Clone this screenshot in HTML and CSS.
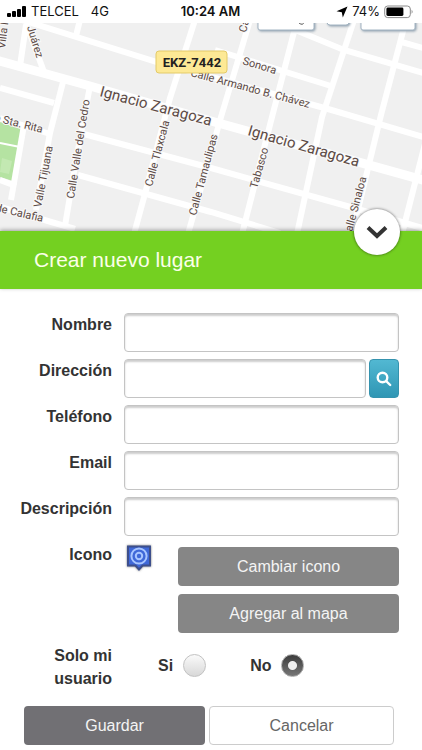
FILE: index.html
```html
<!DOCTYPE html>
<html lang="es">

<head>
  <meta charset="UTF-8">
  <meta name="viewport" content="width=device-width, initial-scale=1.0">
  <title>Crear nuevo lugar</title>
  <link rel="stylesheet" href="styles.css">
</head>

<body>

  <header class="status">
    <div class="status-left">
      <svg width="20" height="12" viewBox="0 0 20 12" aria-hidden="true">
        <rect x="0" y="7" width="4" height="4" rx="1" />
        <rect x="5" y="5" width="4" height="6" rx="1" />
        <rect x="10" y="3" width="4" height="8" rx="1" />
        <rect x="15" y="0" width="4" height="11" rx="1" />
      </svg>
      <span class="carrier">TELCEL</span>
      <span>4G</span>
    </div>
    <div class="clock">10:24 AM</div>
    <div class="status-right">
      <svg width="12" height="12" viewBox="0 0 12 12" aria-hidden="true">
        <path d="M11.5 .5 L6.8 11.5 L5.8 6.2 L.5 5.2 Z" />
      </svg>
      <span>74%</span>
      <svg width="30" height="14" viewBox="0 0 30 14" aria-hidden="true">
        <rect x=".7" y="1" width="25.6" height="11.6" rx="3" fill="none" stroke="#8a8a8a" />
        <rect x="2.4" y="2.6" width="17" height="8.4" rx="1.4" />
        <path d="M27.6 4.8 Q29.6 6.8 27.6 8.8 Z" fill="#8a8a8a" />
      </svg>
    </div>
  </header>

  <div class="map">
    <svg class="map-canvas" viewBox="0 23 422 208" preserveAspectRatio="xMidYMid slice">
      <!-- parque -->
      <path class="park" d="M0 122 L23 130 L13 181 L0 177 Z" />
      <path class="park-light" d="M2 158 L12 161 L9 174 L0 172 Z" />
      <path class="path" d="M0 143 L20 147" />

      <!-- calles -->
      <g class="roads">
        <path d="M22 20 L157 62 L328 109 L430 139" />
        <path d="M215 50 L331 86" />
        <path d="M288 27 L344 50 L430 75" />
        <path d="M398 41 L430 50" />
        <path d="M0 88 L54 103" />
        <path d="M0 118 L22 125 L50 134" />
        <path d="M80 133 L211 168 L354 208 L422 228" />
        <path d="M78 175 L211 212 L280 233" />
        <path d="M0 180 L16 186" />
        <path d="M0 207 L75 229" />
        <path d="M80 20 L76 36" />
        <path d="M26 25 L20 66" />
        <path d="M26 23 L44 72" />
        <path d="M63 82 L50 133 L36 210" />
        <path d="M24 125 L11 200" />
        <path d="M90 86 L76 160 L65 226" />
        <path d="M195 20 L170 98 L146 190 L134 234" />
        <path d="M250 20 L236 67 L221 117 L188 234" />
        <path d="M294 32 L272 117 L242 234" />
        <path d="M354 20 L322 117 L297 234" />
        <path d="M406 20 L381 115 L352 234" />
        <path d="M426 140 L402 234" />
      </g>
      <path class="avenue" d="M-4 60 L90 86 L211 121 L430 182" />

      <!-- nombres -->
      <g class="names">
        <text transform="translate(5 49) rotate(-83)">Villa I</text>
        <text transform="translate(27 27) rotate(73)">Juárez</text>
        <text transform="translate(246 33) rotate(-76)">Ca</text>
        <text transform="translate(242 64) rotate(17)">Sonora</text>
        <text transform="translate(190 76) rotate(15)">Calle Armando B. Chávez</text>
        <text transform="translate(-6 121) rotate(14)">e Sta. Rita</text>
        <text transform="translate(-5 211) rotate(13)">de Calafia</text>
        <text transform="translate(41 208) rotate(-79)">Valle Tijuana</text>
        <text transform="translate(74 199) rotate(-81)">Calle Valle del Cedro</text>
        <text transform="translate(152 187) rotate(-75)">Calle Tlaxcala</text>
        <text transform="translate(196 216) rotate(-75)">Calle Tamaulipas</text>
        <text transform="translate(257 189) rotate(-74)">Tabasco</text>
        <text transform="translate(352 232) rotate(-75)">alle Sinaloa</text>
      </g>
      <g class="names names-avenue">
        <text transform="translate(99 96) rotate(15)">Ignacio Zaragoza</text>
        <text transform="translate(247 135) rotate(16)">Ignacio Zaragoza</text>
      </g>

      <!-- controles que asoman arriba -->
      <g class="map-tabs">
        <rect x="258" y="14" width="56" height="16" rx="2" />
        <rect x="327" y="10" width="22" height="15" rx="3" />
        <rect x="361" y="14" width="54" height="16" rx="2" />
      </g>
      <path class="tab-mark" d="M299 23 Q303 26 304 22" />

      <!-- vehículo -->
      <rect class="plate" x="156" y="51" width="71" height="22" rx="3" />
      <text class="plate-text" x="192" y="67" text-anchor="middle">EKZ-7442</text>
    </svg>
  </div>

  <main class="panel">
    <div class="panel-head">
      <h1>Crear nuevo lugar</h1>
      <button type="button" class="collapse" aria-label="Cerrar">
        <svg width="22" height="16" viewBox="0 0 22 16" aria-hidden="true">
          <path d="M2 3.5 L11 12 L20 3.5" />
        </svg>
      </button>
    </div>

    <form class="form">
      <div class="row">
        <label for="nombre">Nombre</label>
        <input type="text" id="nombre" class="field">
      </div>
      <div class="row">
        <label for="direccion">Dirección</label>
        <div class="search">
          <input type="text" id="direccion" class="field">
          <button type="button" class="search-btn" aria-label="Buscar">
            <svg width="16" height="16" viewBox="0 0 16 16" aria-hidden="true">
              <circle cx="6.5" cy="6.5" r="4.8" />
              <path d="M10.2 10.2 L14.2 14" />
            </svg>
          </button>
        </div>
      </div>
      <div class="row">
        <label for="telefono">Teléfono</label>
        <input type="text" id="telefono" class="field">
      </div>
      <div class="row">
        <label for="email">Email</label>
        <input type="text" id="email" class="field">
      </div>
      <div class="row">
        <label for="descripcion">Descripción</label>
        <input type="text" id="descripcion" class="field">
      </div>

      <div class="row">
        <span class="label">Icono</span>
        <div class="icon-area">
          <svg class="marker" width="30" height="30" viewBox="0 0 30 30" aria-hidden="true">
            <path class="marker-box" d="M4 3.5 H26 V22.5 H18.5 L15 26.5 L11.5 22.5 H4 Z" />
            <circle cx="15" cy="13" r="7.6" />
            <circle cx="15" cy="13" r="3.2" />
          </svg>
          <div class="icon-actions">
            <button type="button" class="btn">Cambiar icono</button>
            <button type="button" class="btn">Agregar al mapa</button>
          </div>
        </div>
      </div>

      <div class="row row-user" role="radiogroup" aria-labelledby="solo">
        <span class="label" id="solo">Solo mi usuario</span>
        <div class="options">
          <label for="si">Si</label>
          <input type="radio" id="si" name="solo" class="radio">
          <label for="no" class="second">No</label>
          <input type="radio" id="no" name="solo" class="radio" checked>
        </div>
      </div>

      <div class="actions">
        <button type="submit" class="btn btn-save">Guardar</button>
        <button type="button" class="btn btn-cancel">Cancelar</button>
      </div>
    </form>
  </main>

</body>

</html>
```

FILE: styles.css
```css
* {
  box-sizing: border-box;
}

body {
  margin: 0;
  background: #fff;
  color: #333;
  font-family: "Liberation Sans", Arial, sans-serif;
  font-size: 16px;
}

button,
input {
  margin: 0;
  font: inherit;
}

svg {
  display: block;
}

/* barra de estado */

.status {
  display: grid;
  grid-template-columns: 1fr auto 1fr;
  align-items: center;
  height: 23px;
  padding: 0 8px 0 7px;
  color: #111;
  font-family: Inter, sans-serif;
  font-size: 13px;
  line-height: 23px;
}

.status-left,
.status-right {
  display: flex;
  align-items: center;
  gap: 4px;
}

.status-right {
  justify-content: flex-end;
}

.carrier {
  margin-right: 8px;
}

.clock {
  font-weight: 600;
}

/* mapa */

.map {
  height: 208px;
}

.map-canvas {
  width: 100%;
  height: 100%;
  background: #f0f0f0;
}

.park {
  fill: #b5e3a2;
}

.park-light {
  fill: #c3e9b2;
}

.path {
  stroke: #fff;
  stroke-width: 2;
}

.roads {
  fill: none;
  stroke: #fff;
  stroke-width: 6;
}

.avenue {
  fill: none;
  stroke: #fff;
  stroke-width: 9;
}

.names {
  fill: #5c4a45;
  stroke: #f8f8f8;
  stroke-width: 2px;
  paint-order: stroke;
  font-family: Roboto, sans-serif;
  font-size: 11px;
}

.names-avenue {
  font-size: 15px;
}

.map-tabs {
  fill: #fff;
  stroke: #a3b4c2;
  stroke-width: 1;
  filter: drop-shadow(1px 1px 1px #8fa0ae);
}

.tab-mark {
  fill: none;
  stroke: #555;
}

.plate {
  fill: #fde995;
  stroke: #e3ca68;
}

.plate-text {
  fill: #222;
  font-family: Roboto, sans-serif;
  font-size: 13px;
  font-weight: 700;
}

/* panel */

.panel-head {
  position: relative;
  padding: 0 34px;
  background: #74d021;
  box-shadow: 0 -1px 4px rgba(0, 0, 0, .35);
}

.panel-head h1 {
  margin: 0;
  color: #fbffe8;
  font-size: 21px;
  font-weight: 400;
  line-height: 58px;
}

.collapse {
  position: absolute;
  top: -22px;
  right: 22px;
  display: flex;
  align-items: center;
  justify-content: center;
  width: 46px;
  height: 46px;
  padding: 0;
  border: 0;
  border-radius: 50%;
  background: #fff;
  box-shadow: 0 0 3px rgba(0, 0, 0, .6);
}

.collapse path {
  fill: none;
  stroke: #333;
  stroke-width: 4;
}

/* formulario */

.form {
  padding: 24px 0 5px;
}

.row {
  display: grid;
  grid-template-columns: 112px 1fr;
  column-gap: 12px;
  margin-bottom: 7px;
  padding-right: 23px;
}

.row label,
.label {
  font-weight: 700;
  line-height: 23px;
  text-align: right;
}

.field {
  width: 100%;
  min-width: 0;
  height: 39px;
  padding: 0 8px;
  border: 1px solid #c4c4c4;
  border-radius: 4px;
  background: #fff;
  box-shadow: inset 0 2px 2px rgba(0, 0, 0, .2);
}

.search {
  display: flex;
  gap: 3px;
}

.search-btn {
  display: flex;
  flex: 0 0 30px;
  align-items: center;
  justify-content: center;
  height: 39px;
  padding: 0;
  border: 1px solid #3593ae;
  border-radius: 4px;
  background: linear-gradient(#52b8d2, #2f96b4);
}

.search-btn svg {
  fill: none;
  stroke: #fff;
  stroke-width: 2.4;
  stroke-linecap: round;
}

.icon-area {
  display: flex;
  gap: 24px;
  padding-top: 4px;
}

.marker {
  flex: none;
  margin-top: -4px;
  fill: none;
  stroke: #a9c6ff;
  stroke-width: 2;
  filter: drop-shadow(0 0 1px #777);
}

.marker-box {
  fill: #3f68d8;
  stroke: #3d4f8c;
}

.icon-actions {
  display: flex;
  flex: 1;
  flex-direction: column;
  gap: 8px;
}

.btn {
  height: 39px;
  padding: 0 8px;
  border: 0;
  border-radius: 4px;
  background: #868686;
  color: #f4f4f4;
  text-align: center;
}

.row-user {
  margin: 11px 0 16px;
}

.row-user .label {
  padding-left: 48px;
}

.options {
  display: flex;
  align-items: center;
  gap: 10px;
  padding: 0 0 4px 34px;
}

.options .second {
  margin-left: 34px;
}

.radio {
  appearance: none;
  width: 23px;
  height: 23px;
  border: 1px solid #c2c2c2;
  border-radius: 50%;
  background: linear-gradient(#fafafa, #d8d8d8);
}

.radio:checked {
  border-color: #aaa;
  background: radial-gradient(circle, #eee 0 4px, transparent 5px), linear-gradient(#3c3c3c, #777);
}

.actions {
  display: grid;
  grid-template-columns: 49fr 50fr;
  gap: 4px;
  padding: 0 28px 0 24px;
}

.btn-save {
  background: #717074;
}

.btn-cancel {
  border: 1px solid #ccc;
  background: #fff;
  color: #666;
}
```
